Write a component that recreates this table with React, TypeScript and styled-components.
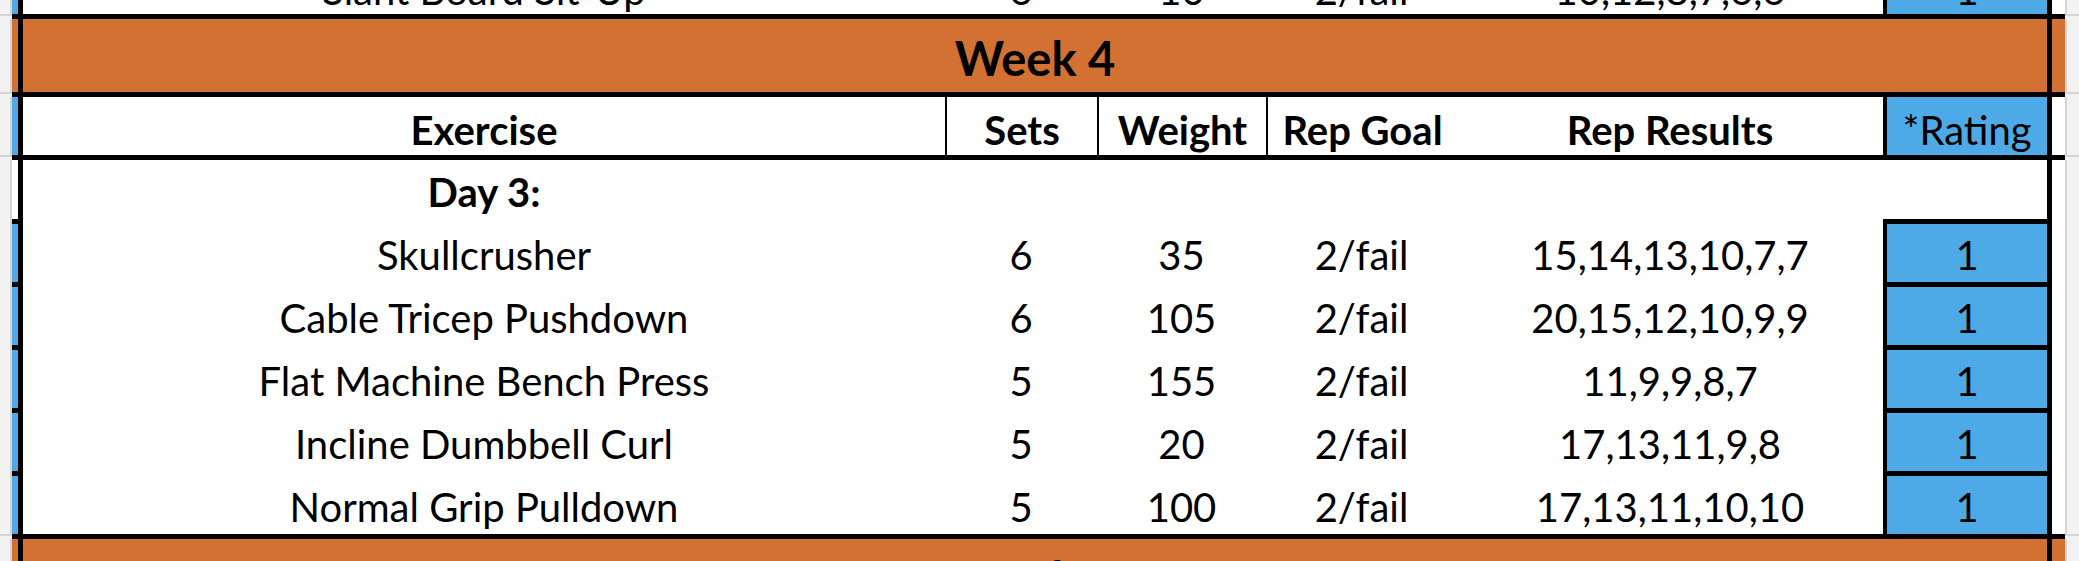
import styled, { createGlobalStyle } from "styled-components";

const GlobalStyle = createGlobalStyle`
  html, body {
    margin: 0;
    padding: 0;
    background: #ffffff;
  }
  body {
    font-family: Lato, "Open Sans", sans-serif;
    color: #000;
  }
`;

const ORANGE = "#d27132";
const BLUE = "#4eaae7";
const GUTTER = "#f2f2f2";
const GRID = "#d4d4d4";

// gutter | side | edge | exercise | sets | weight | goal | results | rating | edge | extra | gutter
const COLUMNS =
  "12px 6px 5px 922px 152px 169px 191px 426px 164px 5px 13px 14px";

type Fill = "white" | "blue" | "orange";
const fillColor = (f?: Fill) =>
  f === "blue" ? BLUE : f === "orange" ? ORANGE : "#ffffff";

const Sheet = styled.div`
  width: 2079px;
  height: 561px;
  overflow: hidden;
  display: flex;
  flex-direction: column;
`;

const Row = styled.div<{ $h: number }>`
  display: grid;
  grid-template-columns: ${COLUMNS};
  height: ${(p) => p.$h}px;
  flex: none;
  overflow: hidden;
`;

const Gutter = styled.div<{ $right?: boolean }>`
  background: ${GUTTER};
  border-right: ${(p) => (p.$right ? "none" : `2px solid ${GRID}`)};
  border-left: ${(p) => (p.$right ? `2px solid ${GRID}` : "none")};
`;

const Side = styled.div<{ $fill?: Fill; $sep?: boolean }>`
  background: ${(p) => fillColor(p.$fill)};
  border-top: ${(p) => (p.$sep ? "5px solid #000" : "none")};
`;

const Edge = styled.div`
  background: #000;
`;

const Extra = styled.div<{ $fill?: Fill }>`
  background: ${(p) => fillColor(p.$fill)};
`;

const Cell = styled.div<{
  $fill?: Fill;
  $bold?: boolean;
  $size?: number;
  $pad?: number;
  $left?: number;
  $top?: number;
  $span?: number;
}>`
  grid-column: span ${(p) => p.$span ?? 1};
  display: flex;
  justify-content: center;
  align-items: flex-end;
  overflow: hidden;
  white-space: nowrap;
  background: ${(p) => fillColor(p.$fill)};
  border-left: ${(p) => (p.$left ? `${p.$left}px solid #000` : "none")};
  border-top: ${(p) => (p.$top ? `${p.$top}px solid #000` : "none")};
  padding-bottom: ${(p) => p.$pad ?? 3}px;
  font-size: ${(p) => p.$size ?? 40}px;
  font-weight: ${(p) => (p.$bold ? 700 : 400)};
  line-height: 1.2;
`;

const Rule = styled.div`
  display: grid;
  grid-template-columns: 12px 1fr 14px;
  height: 5px;
  flex: none;
  & > span {
    background: #000;
  }
  & > i {
    background: ${GUTTER};
    border-top: 2px solid ${GRID};
  }
`;

function FullRule() {
  return (
    <Rule>
      <i />
      <span />
      <i />
    </Rule>
  );
}

type Entry = [string, string, string, string, string, string];

const prevRow: Entry = ["Slant Board Sit-Up", "6", "10", "2/fail", "10,12,8,7,6,6", "1"];

const day3: Entry[] = [
  ["Skullcrusher", "6", "35", "2/fail", "15,14,13,10,7,7", "1"],
  ["Cable Tricep Pushdown", "6", "105", "2/fail", "20,15,12,10,9,9", "1"],
  ["Flat Machine Bench Press", "5", "155", "2/fail", "11,9,9,8,7", "1"],
  ["Incline Dumbbell Curl", "5", "20", "2/fail", "17,13,11,9,8", "1"],
  ["Normal Grip Pulldown", "5", "100", "2/fail", "17,13,11,10,10", "1"],
];

function WeekBand({ label, h }: { label: string; h: number }) {
  return (
    <Row $h={h}>
      <Gutter />
      <Side $fill="orange" />
      <Edge />
      <Cell $span={6} $fill="orange" $bold $size={47} $pad={6}>
        {label}
      </Cell>
      <Edge />
      <Extra $fill="orange" />
      <Gutter $right />
    </Row>
  );
}

function DataRow({ e, h, pad, sep }: { e: Entry; h: number; pad?: number; sep?: boolean }) {
  const top = sep ? 5 : 0;
  return (
    <Row $h={h}>
      <Gutter />
      <Side $fill="blue" $sep={sep} />
      <Edge />
      <Cell $pad={pad}>{e[0]}</Cell>
      <Cell $pad={pad}>{e[1]}</Cell>
      <Cell $pad={pad}>{e[2]}</Cell>
      <Cell $pad={pad}>{e[3]}</Cell>
      <Cell $pad={pad}>{e[4]}</Cell>
      <Cell $pad={pad} $fill="blue" $left={4} $top={top}>
        {e[5]}
      </Cell>
      <Edge />
      <Extra />
      <Gutter $right />
    </Row>
  );
}

export default function App() {
  return (
    <>
      <GlobalStyle />
      <Sheet>
        <DataRow e={prevRow} h={14} pad={0} />
        <FullRule />
        <WeekBand label="Week 4" h={73} />
        <FullRule />
        <Row $h={58}>
          <Gutter />
          <Side $fill="blue" />
          <Edge />
          <Cell $bold $pad={1}>Exercise</Cell>
          <Cell $bold $pad={1} $left={2}>Sets</Cell>
          <Cell $bold $pad={1} $left={2}>Weight</Cell>
          <Cell $bold $pad={1} $left={2}>Rep Goal</Cell>
          <Cell $bold $pad={1}>Rep Results</Cell>
          <Cell $pad={1} $fill="blue" $left={4}>*Rating</Cell>
          <Edge />
          <Extra />
          <Gutter $right />
        </Row>
        <FullRule />
        <Row $h={59}>
          <Gutter />
          <Side />
          <Edge />
          <Cell $bold>Day 3:</Cell>
          <Cell />
          <Cell />
          <Cell />
          <Cell />
          <Cell />
          <Edge />
          <Extra />
          <Gutter $right />
        </Row>
        {day3.map((e) => (
          <DataRow key={e[0]} e={e} h={63} sep />
        ))}
        <FullRule />
        <WeekBand label="Week 5" h={73} />
      </Sheet>
    </>
  );
}
